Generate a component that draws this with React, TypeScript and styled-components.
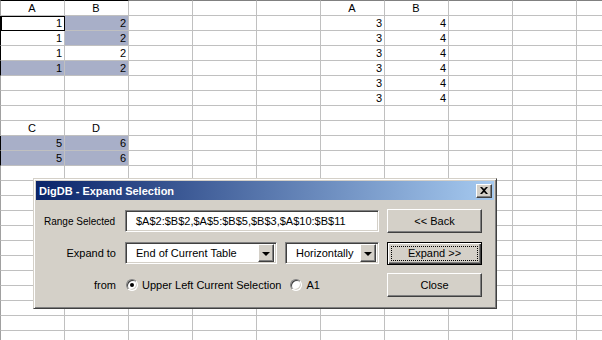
import React from 'react';
import styled, { createGlobalStyle, css } from 'styled-components';

const GlobalStyle = createGlobalStyle`
  html, body {
    margin: 0;
    padding: 0;
    background: #ffffff;
    overflow: hidden;
  }
  body {
    font-family: 'Liberation Sans', Arial, sans-serif;
  }
`;

const ROWS = 23;
const COLS = 10;

type CellData = { v: string; align?: 'center' | 'right'; fill?: boolean; active?: boolean };

const cells: Record<string, CellData> = {};
const put = (r: number, c: number, d: CellData) => {
  cells[`${r},${c}`] = d;
};

put(0, 0, { v: 'A', align: 'center' });
put(0, 1, { v: 'B', align: 'center' });
put(0, 5, { v: 'A', align: 'center' });
put(0, 6, { v: 'B', align: 'center' });
for (let r = 1; r <= 4; r++) {
  put(r, 0, { v: '1', align: 'right', fill: r === 4, active: r === 1 });
  put(r, 1, { v: '2', align: 'right', fill: r !== 3 });
}
for (let r = 1; r <= 6; r++) {
  put(r, 5, { v: '3', align: 'right' });
  put(r, 6, { v: '4', align: 'right' });
}
put(8, 0, { v: 'C', align: 'center' });
put(8, 1, { v: 'D', align: 'center' });
put(9, 0, { v: '5', align: 'right', fill: true });
put(9, 1, { v: '6', align: 'right', fill: true });
put(10, 0, { v: '5', align: 'right', fill: true });
put(10, 1, { v: '6', align: 'right', fill: true });

const markedRows = [1, 2, 3, 4, 9, 10];

const Page = styled.div`
  position: relative;
  width: 602px;
  height: 340px;
  overflow: hidden;
`;

const Sheet = styled.div`
  display: grid;
  grid-template-columns: 65px repeat(${COLS - 1}, 64px);
  grid-template-rows: 16px repeat(${ROWS - 1}, 15px);
`;

const Cell = styled.div<{
  $align?: 'center' | 'right';
  $fill?: boolean;
  $active?: boolean;
  $first: boolean;
  $top: boolean;
  $leftMark: boolean;
  $topMark: boolean;
}>`
  box-sizing: border-box;
  border-right: 1px solid #c0c0c0;
  border-bottom: 1px solid #c0c0c0;
  background: ${({ $fill }) => ($fill ? '#a8afc8' : '#ffffff')};
  font-size: 11px;
  line-height: 14px;
  color: #000;
  text-align: ${({ $align }) => $align ?? 'left'};
  padding: 0 2px 0 1px;
  white-space: nowrap;
  overflow: hidden;
  ${({ $first, $leftMark }) =>
    $first &&
    css`
      border-left: 1px solid ${$leftMark ? '#000' : '#a0a0a0'};
    `}
  ${({ $top, $topMark }) =>
    $top &&
    css`
      border-top: 1px solid ${$topMark ? '#000' : '#808080'};
    `}
  ${({ $active }) =>
    $active &&
    css`
      border-right-color: #000;
      border-bottom-color: #000;
      box-shadow: inset 1px 1px 0 #000;
    `}
`;

const Dialog = styled.div`
  position: absolute;
  left: 33px;
  top: 178px;
  width: 464px;
  box-sizing: border-box;
  background: #d4d0c8;
  border: 1px solid;
  border-color: #d4d0c8 #404040 #404040 #d4d0c8;
  box-shadow: inset 1px 1px 0 #ffffff, inset -1px -1px 0 #808080;
  padding: 2px;
  font-family: 'Liberation Sans', Arial, sans-serif;
`;

const TitleBar = styled.div`
  height: 19px;
  display: flex;
  align-items: center;
  justify-content: space-between;
  padding: 0 2px 0 3px;
  background: linear-gradient(to right, #0a246a, #a6caf0);
`;

const Title = styled.span`
  color: #ffffff;
  font-weight: bold;
  font-size: 11px;
`;

const raised = css`
  border: 1px solid;
  border-color: #ffffff #404040 #404040 #ffffff;
  box-shadow: inset -1px -1px 0 #808080;
  background: #d4d0c8;
  box-sizing: border-box;
`;

const sunken = css`
  border: 1px solid;
  border-color: #808080 #ffffff #ffffff #808080;
  box-shadow: inset 1px 1px 0 #404040, inset -1px -1px 0 #d4d0c8;
  background: #ffffff;
  box-sizing: border-box;
`;

const CloseButton = styled.div`
  ${raised};
  width: 16px;
  height: 14px;
  display: flex;
  align-items: center;
  justify-content: center;
`;

const Body = styled.div`
  display: grid;
  grid-template-columns: 73px 254px 95px;
  grid-template-rows: repeat(3, 24px);
  column-gap: 8px;
  row-gap: 8px;
  padding: 9px 11px 9px 8px;
  align-items: center;
`;

const Label = styled.span<{ $small?: boolean }>`
  font-size: ${({ $small }) => ($small ? '10px' : '11px')};
  color: #000;
  text-align: ${({ $small }) => ($small ? 'left' : 'right')};
  padding-right: ${({ $small }) => ($small ? '0' : '1px')};
  white-space: nowrap;
`;

const TextField = styled.div`
  ${sunken};
  height: 22px;
  display: flex;
  align-items: center;
  padding-left: 10px;
  font-size: 11px;
  color: #000;
  white-space: nowrap;
`;

const Row = styled.div`
  display: flex;
  align-items: center;
  gap: 8px;
`;

const Combo = styled.div<{ $width: number }>`
  ${sunken};
  width: ${({ $width }) => $width}px;
  height: 22px;
  display: flex;
  align-items: center;
  justify-content: space-between;
  padding: 2px 2px 2px 10px;
  font-size: 11px;
  color: #000;
  white-space: nowrap;
`;

const DropButton = styled.div`
  ${raised};
  width: 16px;
  height: 18px;
  flex-shrink: 0;
  display: flex;
  align-items: center;
  justify-content: center;
  &::after {
    content: '';
    border-left: 4px solid transparent;
    border-right: 4px solid transparent;
    border-top: 4px solid #000;
    margin-top: 1px;
  }
`;

const RadioGroup = styled.div`
  display: flex;
  align-items: center;
  font-size: 11px;
  color: #000;
  white-space: nowrap;
`;

const Radio = styled.span<{ $checked?: boolean }>`
  width: 12px;
  height: 12px;
  box-sizing: border-box;
  border-radius: 50%;
  border: 1px solid;
  border-color: #808080 #ffffff #ffffff #808080;
  box-shadow: inset 1px 1px 0 #404040, inset -1px -1px 0 #d4d0c8;
  background: #ffffff;
  display: inline-flex;
  align-items: center;
  justify-content: center;
  margin: 0 4px 0 1px;
  &::after {
    content: '';
    width: 4px;
    height: 4px;
    border-radius: 50%;
    background: ${({ $checked }) => ($checked ? '#000' : 'transparent')};
  }
`;

const RadioLabel = styled.span`
  margin-right: 8px;
`;

const Button = styled.div<{ $default?: boolean }>`
  position: relative;
  height: ${({ $default }) => ($default ? '23px' : '24px')};
  ${raised};
  display: flex;
  align-items: center;
  justify-content: center;
  font-size: 11px;
  color: #000;
  ${({ $default }) =>
    $default &&
    css`
      border: 1px solid #000;
      box-shadow: inset 1px 1px 0 #ffffff, inset -1px -1px 0 #404040, inset -2px -2px 0 #808080;
      &::after {
        content: '';
        position: absolute;
        inset: 3px;
        border: 1px dotted #000;
      }
    `}
`;

const CloseIcon = () => (
  <svg width="8" height="7" viewBox="0 0 8 7">
    <path d="M0 0h2l2 2 2-2h2L5 3.5 8 7H6L4 5 2 7H0l3-3.5z" fill="#000" />
  </svg>
);

export default function App() {
  const grid: React.ReactNode[] = [];
  for (let r = 0; r < ROWS; r++) {
    for (let c = 0; c < COLS; c++) {
      const d = cells[`${r},${c}`];
      grid.push(
        <Cell
          key={`${r}-${c}`}
          $align={d?.align}
          $fill={d?.fill}
          $active={d?.active}
          $first={c === 0}
          $top={r === 0}
          $leftMark={markedRows.includes(r)}
          $topMark={c <= 1}
        >
          {d?.v}
        </Cell>
      );
    }
  }

  return (
    <Page>
      <GlobalStyle />
      <Sheet>{grid}</Sheet>
      <Dialog>
        <TitleBar>
          <Title>DigDB - Expand Selection</Title>
          <CloseButton>
            <CloseIcon />
          </CloseButton>
        </TitleBar>
        <Body>
          <Label $small>Range Selected</Label>
          <TextField>$A$2:$B$2,$A$5:$B$5,$B$3,$A$10:$B$11</TextField>
          <Button>&lt;&lt; Back</Button>

          <Label>Expand to</Label>
          <Row>
            <Combo $width={152}>
              End of Current Table
              <DropButton />
            </Combo>
            <Combo $width={94}>
              Horizontally
              <DropButton />
            </Combo>
          </Row>
          <Button $default>Expand &gt;&gt;</Button>

          <Label>from</Label>
          <RadioGroup>
            <Radio $checked />
            <RadioLabel>Upper Left Current Selection</RadioLabel>
            <Radio />
            <span>A1</span>
          </RadioGroup>
          <Button>Close</Button>
        </Body>
      </Dialog>
    </Page>
  );
}
